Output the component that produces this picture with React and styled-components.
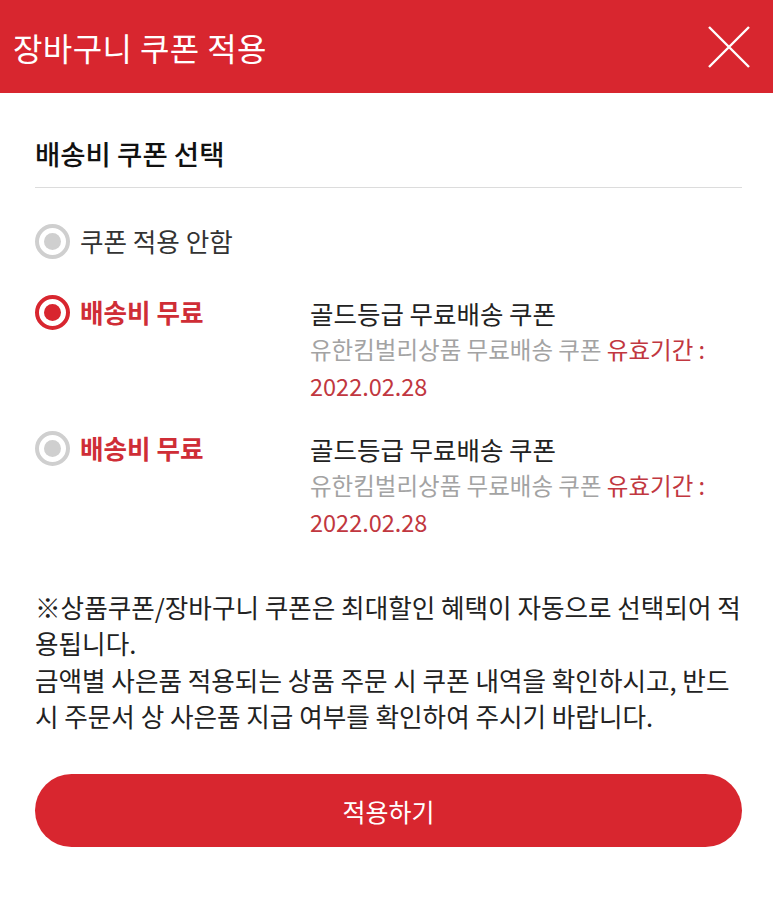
import React, { useState } from 'react';
import styled, { createGlobalStyle, css } from 'styled-components';

const RED = '#d8262f';

const GlobalStyle = createGlobalStyle`
  * { box-sizing: border-box; }
  body {
    margin: 0;
    background: #fff;
    font-family: "Noto Sans CJK KR", "Noto Sans", sans-serif;
    color: #222;
  }
`;

const Sheet = styled.div`
  width: 773px;
  min-height: 900px;
  background: #fff;
`;

const Header = styled.header`
  height: 93px;
  background: ${RED};
  display: flex;
  align-items: center;
  justify-content: space-between;
  padding: 0 22px 0 13px;
`;

const Title = styled.h1`
  margin: 0;
  font-size: 32px;
  font-weight: 400;
  color: #fff;
  letter-spacing: 0.4px;
`;

const CloseButton = styled.button`
  width: 44px;
  height: 44px;
  padding: 0;
  border: 0;
  background: none;
  display: flex;
  align-items: center;
  justify-content: center;
  cursor: pointer;
`;

const Body = styled.div`
  padding: 42px 31px 0 35px;
`;

const SectionTitle = styled.h2`
  margin: 0;
  padding-bottom: 16px;
  border-bottom: 1px solid #dcdcdc;
  font-size: 27.5px;
  line-height: 36px;
  font-weight: 500;
  color: #111;
`;

const OptionList = styled.div`
  display: flex;
  flex-direction: column;
  padding-top: 35px;
`;

const Option = styled.label`
  display: grid;
  grid-template-columns: 36px 221px 1fr;
  column-gap: 9px;
  align-items: start;
  margin-top: ${(p) => p.$gap}px;
  cursor: pointer;
`;

const Radio = styled.span`
  width: 35px;
  height: 35px;
  margin-top: 1px;
  border-radius: 50%;
  border: 4px solid ${(p) => (p.$checked ? RED : '#cfcfcf')};
  display: flex;
  align-items: center;
  justify-content: center;
  &::after {
    content: '';
    width: 17px;
    height: 17px;
    border-radius: 50%;
    background: ${(p) => (p.$checked ? RED : '#cfcfcf')};
  }
`;

const Label = styled.span`
  font-size: 25.6px;
  line-height: 36px;
  ${(p) =>
    p.$accent
      ? css`
          color: #cf2d36;
          font-weight: 700;
        `
      : css`
          color: #333;
          font-weight: 400;
        `}
`;

const Detail = styled.div`
  display: flex;
  flex-direction: column;
  font-size: 23.5px;
  line-height: 37px;
`;

const CouponName = styled.span`
  color: #222;
  font-size: 25.5px;
`;

const CouponDesc = styled.span`
  color: #a3a3a3;
  white-space: nowrap;
`;

const Expire = styled.span`
  color: #c13740;
`;

const Notice = styled.p`
  margin: 48px 0 0;
  font-size: 25.6px;
  line-height: 36.3px;
  color: #222;
  white-space: nowrap;
`;

const ApplyButton = styled.button`
  display: block;
  width: 707px;
  height: 73px;
  margin-top: 40px;
  border: 0;
  border-radius: 37px;
  background: ${RED};
  color: #fff;
  font-family: inherit;
  font-size: 25px;
  font-weight: 400;
  cursor: pointer;
`;

const coupons = [
  { id: 'gold1', name: '골드등급 무료배송 쿠폰', desc: '유한킴벌리상품 무료배송 쿠폰', date: '2022.02.28' },
  { id: 'gold2', name: '골드등급 무료배송 쿠폰', desc: '유한킴벌리상품 무료배송 쿠폰', date: '2022.02.28' },
];

// the screenshot wraps the notice mid-word, so the lines are kept as they appear
const noticeLines = [
  '※상품쿠폰/장바구니 쿠폰은 최대할인 혜택이 자동으로 선택되어 적',
  '용됩니다.',
  '금액별 사은품 적용되는 상품 주문 시 쿠폰 내역을 확인하시고, 반드',
  '시 주문서 상 사은품 지급 여부를 확인하여 주시기 바랍니다.',
];

const CloseIcon = () => (
  <svg width="42" height="42" viewBox="0 0 42 42">
    <path d="M1 1 L41 41 M41 1 L1 41" stroke="#fff" strokeWidth="2.4" fill="none" />
  </svg>
);

export default function App() {
  const [selected, setSelected] = useState('gold1');

  return (
    <Sheet>
      <GlobalStyle />
      <Header>
        <Title>장바구니 쿠폰 적용</Title>
        <CloseButton aria-label="닫기">
          <CloseIcon />
        </CloseButton>
      </Header>

      <Body>
        <SectionTitle>배송비 쿠폰 선택</SectionTitle>

        <OptionList>
          <Option $gap={0} onClick={() => setSelected('none')}>
            <Radio $checked={selected === 'none'} />
            <Label>쿠폰 적용 안함</Label>
          </Option>

          {coupons.map((c, i) => (
            <Option key={c.id} $gap={i === 0 ? 35 : 25} onClick={() => setSelected(c.id)}>
              <Radio $checked={selected === c.id} />
              <Label $accent>배송비 무료</Label>
              <Detail>
                <CouponName>{c.name}</CouponName>
                <CouponDesc>
                  {c.desc} <Expire>유효기간 :</Expire>
                </CouponDesc>
                <Expire>{c.date}</Expire>
              </Detail>
            </Option>
          ))}
        </OptionList>

        <Notice>
          {noticeLines.map((line, i) => (
            <React.Fragment key={i}>
              {i > 0 && <br />}
              {line}
            </React.Fragment>
          ))}
        </Notice>

        <ApplyButton>적용하기</ApplyButton>
      </Body>
    </Sheet>
  );
}
